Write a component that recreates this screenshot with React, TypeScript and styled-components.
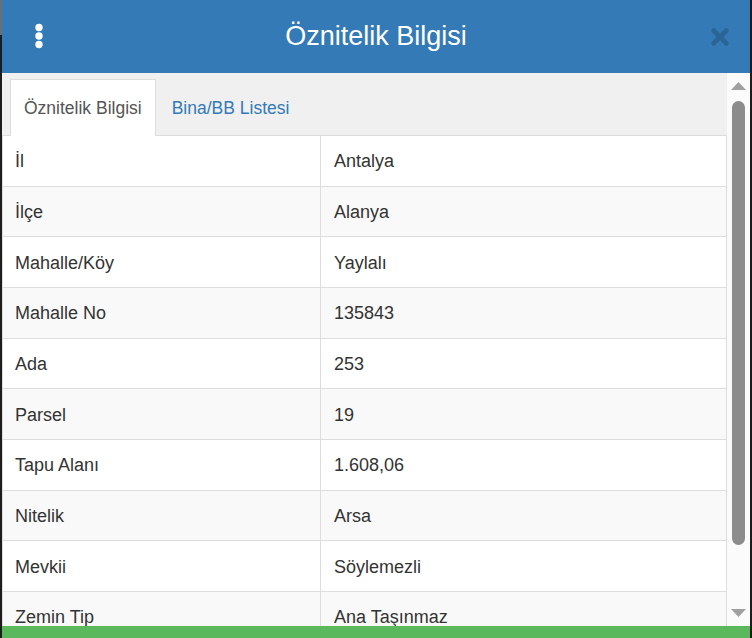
import React from "react";
import styled, { createGlobalStyle } from "styled-components";

const Global = createGlobalStyle`
  html, body { margin: 0; padding: 0; }
  body {
    background: linear-gradient(#6e6e6e, #6e6e6e) 0 0 / 2px 35px no-repeat, #1d1d1d;
    font-family: "Liberation Sans", Arial, Helvetica, sans-serif;
    overflow: hidden;
  }
`;

const Dialog = styled.div`
  margin-left: 2px;
  width: 748px;
  height: 638px;
  display: flex;
  flex-direction: column;
  overflow: hidden;
`;

const Header = styled.header`
  height: 73px;
  flex: none;
  background: #337ab7;
  display: grid;
  grid-template-columns: 1fr auto 1fr;
  align-items: center;
  padding: 0 20px;
  box-sizing: border-box;
`;

const Title = styled.h1`
  margin: 0;
  font-size: 27px;
  font-weight: normal;
  color: #fff;
  line-height: 1;
  padding-bottom: 1px;
`;

const IconButton = styled.button<{ $end?: boolean }>`
  border: 0;
  background: none;
  padding: 0;
  width: 20px;
  height: 30px;
  display: flex;
  align-items: center;
  justify-content: center;
  cursor: pointer;
  justify-self: ${(p) => (p.$end ? "end" : "start")};
  margin-left: ${(p) => (p.$end ? "0" : "6.5px")};
`;

const Body = styled.div`
  flex: 1;
  display: flex;
  min-height: 0;
`;

const Content = styled.div`
  flex: 1;
  overflow: hidden;
  background: #fff;
`;

const TabStrip = styled.ul`
  margin: 0;
  list-style: none;
  height: 63px;
  box-sizing: border-box;
  background: #f0f0f0;
  border-bottom: 1px solid #dddddd;
  padding: 6px 8px 0;
  display: flex;
  gap: 2px;
`;

const Tab = styled.li<{ $active?: boolean }>`
  height: 57px;
  box-sizing: border-box;
  padding: 0 13px;
  display: flex;
  align-items: center;
  font-size: 17.5px;
  color: ${(p) => (p.$active ? "#555555" : "#337ab7")};
  background: ${(p) => (p.$active ? "#fff" : "transparent")};
  border: 1px solid ${(p) => (p.$active ? "#dddddd" : "transparent")};
  border-bottom: 0;
  margin-bottom: -1px;
`;

const Table = styled.div`
  border-left: 1px solid #dddddd;
  border-right: 1px solid #dddddd;
`;

const Row = styled.div<{ $striped?: boolean }>`
  display: grid;
  grid-template-columns: 317px 1fr;
  height: 50.67px;
  box-sizing: border-box;
  border-bottom: 1px solid #dddddd;
  background: ${(p) => (p.$striped ? "#f9f9f9" : "#fff")};
`;

const Cell = styled.div<{ $value?: boolean }>`
  display: flex;
  align-items: center;
  font-size: 18px;
  color: #333333;
  border-left: ${(p) => (p.$value ? "1px solid #dddddd" : "0")};
  padding: 2px 12px 0 ${(p) => (p.$value ? "13px" : "12px")};
`;

const Scrollbar = styled.div`
  width: 23px;
  flex: none;
  background: #fbfbfb;
  display: flex;
  flex-direction: column;
  align-items: center;
  padding: 9px 0 9px;
  box-sizing: border-box;
`;

const Arrow = styled.svg`
  display: block;
  flex: none;
`;

const Thumb = styled.div<{ $h: number }>`
  margin-top: 11px;
  width: 13px;
  height: ${(p) => p.$h}px;
  border-radius: 7px;
  background: #8c8c8c;
  flex: none;
`;

const Spacer = styled.div`
  flex: 1;
`;

const Footer = styled.div`
  height: 12px;
  flex: none;
  background: #5cb85c;
`;

const rows: [string, string][] = [
  ["İl", "Antalya"],
  ["İlçe", "Alanya"],
  ["Mahalle/Köy", "Yaylalı"],
  ["Mahalle No", "135843"],
  ["Ada", "253"],
  ["Parsel", "19"],
  ["Tapu Alanı", "1.608,06"],
  ["Nitelik", "Arsa"],
  ["Mevkii", "Söylemezli"],
  ["Zemin Tip", "Ana Taşınmaz"],
];

export default function App() {
  return (
    <>
      <Global />
      <Dialog>
        <Header>
          <IconButton aria-label="menu">
            <svg width="10" height="28" viewBox="0 0 10 28">
              <circle cx="5" cy="4.5" r="3.7" fill="#fff" />
              <circle cx="5" cy="13" r="3.7" fill="#fff" />
              <circle cx="5" cy="21.5" r="3.7" fill="#fff" />
            </svg>
          </IconButton>
          <Title>Öznitelik Bilgisi</Title>
          <IconButton $end aria-label="close">
            <svg width="20" height="20" viewBox="0 0 20 20">
              <path
                d="M3.5 3.5 L16.5 16.5 M16.5 3.5 L3.5 16.5"
                stroke="#2b6595"
                strokeWidth="4.6"
                strokeLinecap="round"
              />
            </svg>
          </IconButton>
        </Header>
        <Body>
          <Content>
            <TabStrip>
              <Tab $active>Öznitelik Bilgisi</Tab>
              <Tab>Bina/BB Listesi</Tab>
            </TabStrip>
            <Table>
              {rows.map(([k, v], i) => (
                <Row key={k} $striped={i % 2 === 1}>
                  <Cell>{k}</Cell>
                  <Cell $value>{v}</Cell>
                </Row>
              ))}
            </Table>
          </Content>
          <Scrollbar>
            <Arrow width="15" height="8" viewBox="0 0 15 8">
              <polygon points="7.5,0 15,8 0,8" fill="#a0a0a0" />
            </Arrow>
            <Thumb $h={444} />
            <Spacer />
            <Arrow width="15" height="8" viewBox="0 0 15 8">
              <polygon points="0,0 15,0 7.5,8" fill="#a0a0a0" />
            </Arrow>
          </Scrollbar>
        </Body>
        <Footer />
      </Dialog>
    </>
  );
}
